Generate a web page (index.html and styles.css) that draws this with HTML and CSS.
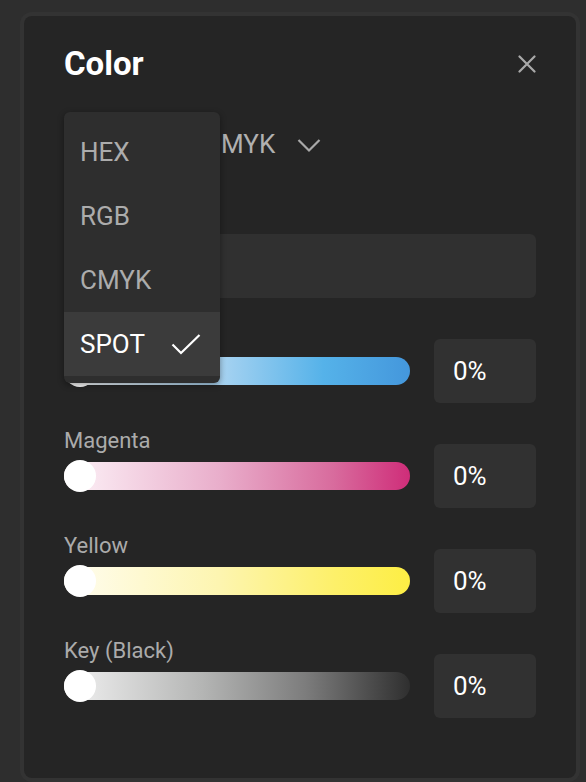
FILE: index.html
```html
<!DOCTYPE html>
<html lang="en">
<head>
<meta charset="utf-8">
<title>Color</title>
<link rel="stylesheet" href="styles.css">
</head>
<body>
<div class="frame">
  <div class="panel">
    <div class="header">
      <h1 class="title">Color</h1>
      <button class="close" aria-label="Close">
        <svg width="18" height="18" viewBox="0 0 18 18"><path d="M1.5 1.5 L16.5 16.5 M16.5 1.5 L1.5 16.5" stroke="#a9a9a9" stroke-width="2.2" fill="none" stroke-linecap="round"/></svg>
      </button>
    </div>

    <div class="select">
      <span class="select-value">CMYK</span>
      <svg class="chevron" width="24" height="15" viewBox="0 0 24 15"><polyline points="1.5,2 12,12.5 22.5,2" stroke="#a9a9a9" stroke-width="2.2" fill="none"/></svg>
    </div>

    <div class="input"></div>

    <div class="channels">
      <div class="channel">
        <div class="label">Cyan</div>
        <div class="slider"><div class="track cyan"></div><div class="thumb"></div></div>
        <div class="value">0%</div>
      </div>
      <div class="channel">
        <div class="label">Magenta</div>
        <div class="slider"><div class="track magenta"></div><div class="thumb"></div></div>
        <div class="value">0%</div>
      </div>
      <div class="channel">
        <div class="label">Yellow</div>
        <div class="slider"><div class="track yellow"></div><div class="thumb"></div></div>
        <div class="value">0%</div>
      </div>
      <div class="channel">
        <div class="label">Key (Black)</div>
        <div class="slider"><div class="track black"></div><div class="thumb"></div></div>
        <div class="value">0%</div>
      </div>
    </div>

    <ul class="menu">
      <li class="item">HEX</li>
      <li class="item">RGB</li>
      <li class="item">CMYK</li>
      <li class="item selected">SPOT
        <svg width="30" height="21" viewBox="0 0 30 21"><polyline points="1.5,10.5 10,19 28.5,1" stroke="#ffffff" stroke-width="2.2" fill="none"/></svg>
      </li>
    </ul>
  </div>
</div>
</body>
</html>
```

FILE: styles.css
```css
* { box-sizing: border-box; }

html, body {
  margin: 0;
  padding: 0;
  background: #2e2e2e;
  overflow: hidden;
}

body {
  padding: 12px 6px 0 20px;
  font-family: Roboto, "Liberation Sans", sans-serif;
}

.frame {
  width: 560px;
  padding: 4px;
  border-radius: 12px;
  background: #333333;
}

.panel {
  position: relative;
  height: 762px;
  border-radius: 8px;
  background: #252525;
  padding: 28px 40px 0 40px;
}

.header {
  display: flex;
  align-items: center;
  justify-content: space-between;
  height: 40px;
}

.title {
  margin: 0;
  font-size: 33px;
  line-height: 40px;
  font-weight: 700;
  color: #ffffff;
}

.close {
  display: flex;
  align-items: center;
  justify-content: center;
  width: 20px;
  height: 20px;
  margin-right: -1px;
  padding: 0;
  border: none;
  background: none;
}

.select {
  display: flex;
  align-items: center;
  height: 64px;
  margin-top: 28px;
  padding-left: 140px;
}

.select-value {
  font-size: 26px;
  line-height: 32px;
  color: #b0b0b0;
}

.chevron {
  margin-left: 22px;
  margin-top: 3px;
}

.input {
  height: 64px;
  margin-top: 58px;
  border-radius: 6px;
  background: #303030;
}

.channels {
  display: flex;
  flex-direction: column;
  gap: 24.5px;
  margin-top: 24.5px;
}

.channel {
  display: grid;
  grid-template-columns: 346px 102px;
  grid-template-rows: auto 64px;
  column-gap: 24px;
  align-items: center;
}

.label {
  grid-column: 1 / 3;
  font-size: 22px;
  line-height: 26px;
  margin-bottom: -9.5px;
  color: #ababab;
}

.slider {
  position: relative;
  height: 28px;
}

.track {
  height: 28px;
  border-radius: 14px;
}

.track.cyan {
  background: linear-gradient(90deg, #ffffff 0%, #a8d3f1 45%, #55b2e9 75%, #4497dc 100%);
}

.track.magenta {
  background: linear-gradient(90deg, #fdf3f8 0%, #e9aecb 45%, #d86b9d 78%, #cf2d79 100%);
}

.track.yellow {
  background: linear-gradient(90deg, #fffdf1 0%, #fdf5b0 45%, #fdf06a 78%, #fdee44 100%);
}

.track.black {
  background: linear-gradient(90deg, #f2f2f2 0%, #b4b5b4 40%, #7c7c7c 70%, #2f2f2f 100%);
}

.thumb {
  position: absolute;
  left: 0;
  top: -2px;
  width: 32px;
  height: 32px;
  border-radius: 50%;
  background: #ffffff;
}

.value {
  height: 64px;
  border-radius: 6px;
  background: #313131;
  display: flex;
  align-items: center;
  padding-left: 19px;
  font-size: 26px;
  color: #ffffff;
}

.menu {
  position: absolute;
  top: 96px;
  left: 40px;
  width: 156px;
  margin: 0;
  padding: 8px 0 7px;
  list-style: none;
  border-radius: 6px;
  background: #2e2e2e;
  box-shadow: 0 2px 6px rgba(0, 0, 0, 0.4);
}

.item {
  display: flex;
  align-items: center;
  justify-content: space-between;
  height: 64px;
  padding: 0 19px 0 16px;
  font-size: 26px;
  color: #acacac;
}

.item.selected {
  background: #3b3b3b;
  color: #ffffff;
}
```
